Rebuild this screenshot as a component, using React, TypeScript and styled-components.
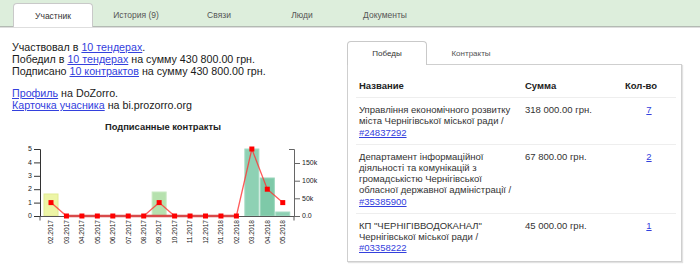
import React from "react";
import styled, { createGlobalStyle } from "styled-components";

const GlobalStyle = createGlobalStyle`
  html, body {
    margin: 0;
    padding: 0;
    background: #fff;
  }
  body {
    font-family: "Liberation Sans", Arial, sans-serif;
    color: #222;
  }
`;

const Page = styled.div`
  width: 700px;
  height: 268px;
  overflow: hidden;
`;

const TopBar = styled.div`
  display: flex;
  align-items: flex-end;
  gap: 3px;
  height: 27px;
  padding: 0 0 0 13px;
  box-sizing: border-box;
  background: #ddeedc;
  border-bottom: 1px solid #b3bab3;
  box-shadow: 0 1px 0 #dedede;
`;

const Tab = styled.div<{ $active?: boolean; $size?: number }>`
  width: 80px;
  box-sizing: border-box;
  display: flex;
  align-items: center;
  justify-content: center;
  font-size: ${p => p.$size || 8.5}px;
  color: ${p => (p.$active ? "#333" : "#555")};
  background: ${p => (p.$active ? "#fff" : "transparent")};
  border: 1px solid ${p => (p.$active ? "#c9c9c9" : "transparent")};
  border-bottom: none;
  border-radius: 4px 4px 0 0;
  margin-bottom: ${p => (p.$active ? "-1px" : "0")};
  height: ${p => (p.$active ? "24px" : "23px")};
  cursor: pointer;
`;

const Content = styled.div`
  display: flex;
  gap: 12px;
  padding: 13px 18px 0 0;
`;

const LeftCol = styled.div`
  width: 335px;
  padding-top: 1px;
`;

const Info = styled.p<{ $gap?: number }>`
  margin: ${p => p.$gap || 0}px 0 0;
  padding-left: 12px;
  font-size: 10.7px;
  line-height: 12px;
  color: #1a1a1a;
`;

const Link = styled.a`
  color: #3340dd;
  text-decoration: underline;
  cursor: pointer;
`;

const ChartTitle = styled.div`
  margin-top: 10px;
  text-align: center;
  font-size: 9.4px;
  line-height: 12px;
  font-weight: bold;
  color: #222;
  padding-right: 9px;
`;

const ChartSvg = styled.svg`
  display: block;
  width: 335px;
  height: 134px;
  font-family: "Liberation Sans", Arial, sans-serif;
`;

const RightCol = styled.div`
  width: 335px;
`;

const SubTabs = styled.div`
  display: flex;
  gap: 4px;
  height: 24px;
  align-items: flex-end;
`;

const Panel = styled.div`
  border: 1px solid #cfcfcf;
  box-shadow: 1px 1px 1px #e2e2e2;
  padding: 9px 7px 6px 8px;
  height: 198px;
  box-sizing: border-box;
`;

const Table = styled.table`
  width: 320px;
  border-collapse: collapse;
  table-layout: fixed;
  font-size: 9.5px;
  color: #333;
`;

const Th = styled.th<{ $w: number }>`
  width: ${p => p.$w}px;
  text-align: left;
  font-weight: bold;
  padding: 6px 3px;
  line-height: 11.2px;
  color: #222;
  border-bottom: 1px solid #eee;
`;

const Td = styled.td<{ $center?: boolean }>`
  vertical-align: top;
  padding: 6px 3px;
  line-height: 11.2px;
  text-align: ${p => (p.$center ? "center" : "left")};
`;

const Tr = styled.tr`
  & + & > td {
    border-top: 1px solid #eee;
  }
`;

const months = [
  "02.2017", "03.2017", "04.2017", "05.2017", "06.2017", "07.2017", "08.2017", "09.2017",
  "10.2017", "11.2017", "12.2017", "01.2018", "02.2018", "03.2018", "04.2018", "05.2018",
];
const counts = [1, 0, 0, 0, 0, 0, 0, 1, 0, 0, 0, 0, 0, 5, 2, 1];
const bars: Record<number, { h: number; fill: string; stroke: string }> = {
  0: { h: 22, fill: "#edf5a6", stroke: "#e1eb92" },
  7: { h: 24, fill: "#b6e1ae", stroke: "#c8e9c2" },
  13: { h: 67, fill: "#8ed1b4", stroke: "#a5dbc4" },
  14: { h: 38, fill: "#7ec9a8", stroke: "#98d5ba" },
  15: { h: 4, fill: "#8ed1b4", stroke: "#a5dbc4" },
};

const X0 = 51;
const STEP = 15.45;
const BASE = 217;
const UNIT = 13.4;
const AX_L = 40;
const AX_R = 294;

const Chart = () => {
  const cx = (i: number) => X0 + i * STEP;
  const pts = counts.map((c, i) => `${cx(i)},${BASE - c * UNIT}`).join(" ");
  const right = [
    { v: "0.0", y: 217 },
    { v: "50k", y: 199.3 },
    { v: "100k", y: 181.7 },
    { v: "150k", y: 164 },
  ];
  return (
    <ChartSvg viewBox="0 134 335 134">
      {Object.entries(bars).map(([k, b]) => {
        const i = Number(k);
        return (
          <rect
            key={k}
            x={cx(i) - 7}
            y={BASE - b.h}
            width={14}
            height={b.h}
            fill={b.fill}
            stroke={b.stroke}
            strokeWidth={1}
          />
        );
      })}

      {/* left axis */}
      <path d={`M${AX_L - 6},150.5H${AX_L + 0.5}V217.5H${AX_L - 6}`} fill="none" stroke="#333" />
      {[0, 1, 2, 3, 4, 5].map(v => (
        <g key={v}>
          <line x1={AX_L - 6} x2={AX_L} y1={BASE - v * UNIT + 0.5} y2={BASE - v * UNIT + 0.5} stroke="#333" />
          <text x={AX_L - 8} y={BASE - v * UNIT} dy="0.32em" textAnchor="end" fontSize="7" fill="#222">
            {v}
          </text>
        </g>
      ))}

      {/* right axis */}
      <path d={`M${AX_R - 5},150.5H${AX_R + 0.5}V217.5H${AX_R + 6}`} fill="none" stroke="#666" />
      {right.map(t => (
        <g key={t.v}>
          <line x1={AX_R} x2={AX_R + 6} y1={t.y + 0.5} y2={t.y + 0.5} stroke="#666" />
          <text x={AX_R + 8} y={t.y} dy="0.32em" fontSize="7" fill="#222">
            {t.v}
          </text>
        </g>
      ))}

      {/* x axis */}
      <path d={`M${AX_L},221.5V217.5H${AX_R}V221.5`} fill="none" stroke="#555" />
      {months.map((m, i) => (
        <text
          key={m}
          transform={`translate(${cx(i)},221) rotate(-90)`}
          textAnchor="end"
          dy="0.34em"
          fontSize="6.6"
          fill="#222"
        >
          {m}
        </text>
      ))}

      {/* counts line */}
      <polyline points={pts} fill="none" stroke="#f33" strokeOpacity={0.8} strokeWidth={1.3} />
      <line x1={cx(1)} x2={cx(12)} y1={BASE} y2={BASE} stroke="#d84a4a" strokeWidth={2.4} />
      {counts.map((c, i) => (
        <rect key={i} x={cx(i) - 2.5} y={BASE - c * UNIT - 2.5} width={5} height={5} fill="#f00" />
      ))}
    </ChartSvg>
  );
};

const rows = [
  {
    name: "Управління економічного розвитку міста Чернігівської міської ради /",
    code: "#24837292",
    sum: "318 000.00 грн.",
    n: "7",
  },
  {
    name: "Департамент інформаційної діяльності та комунікацій з громадськістю Чернігівської обласної державної адміністрації /",
    code: "#35385900",
    sum: "67 800.00 грн.",
    n: "2",
  },
  {
    name: "КП \"ЧЕРНІГІВВОДОКАНАЛ\" Чернігівської міської ради /",
    code: "#03358222",
    sum: "45 000.00 грн.",
    n: "1",
  },
];

export default function App() {
  return (
    <Page>
      <GlobalStyle />
      <TopBar>
        <Tab $active>Участник</Tab>
        <Tab>История (9)</Tab>
        <Tab>Связи</Tab>
        <Tab>Люди</Tab>
        <Tab>Документы</Tab>
      </TopBar>
      <Content>
        <LeftCol>
          <Info>
            Участвовал в <Link>10 тендерах</Link>.
            <br />
            Победил в <Link>10 тендерах</Link> на сумму 430 800.00 грн.
            <br />
            Подписано <Link>10 контрактов</Link> на сумму 430 800.00 грн.
          </Info>
          <Info $gap={10}>
            <Link>Профиль</Link> на DoZorro.
            <br />
            <Link>Карточка учасника</Link> на bi.prozorro.org
          </Info>
          <ChartTitle>Подписанные контракты</ChartTitle>
          <Chart />
        </LeftCol>
        <RightCol>
          <SubTabs>
            <Tab $active $size={8}>Победы</Tab>
            <Tab $size={8}>Контракты</Tab>
          </SubTabs>
          <Panel>
            <Table>
              <thead>
                <tr>
                  <Th $w={160}>Название</Th>
                  <Th $w={94}>Сумма</Th>
                  <Th $w={48}>Кол-во</Th>
                </tr>
              </thead>
              <tbody>
                {rows.map(r => (
                  <Tr key={r.code}>
                    <Td>
                      {r.name} <Link>{r.code}</Link>
                    </Td>
                    <Td>{r.sum}</Td>
                    <Td $center>
                      <Link>{r.n}</Link>
                    </Td>
                  </Tr>
                ))}
              </tbody>
            </Table>
          </Panel>
        </RightCol>
      </Content>
    </Page>
  );
}
